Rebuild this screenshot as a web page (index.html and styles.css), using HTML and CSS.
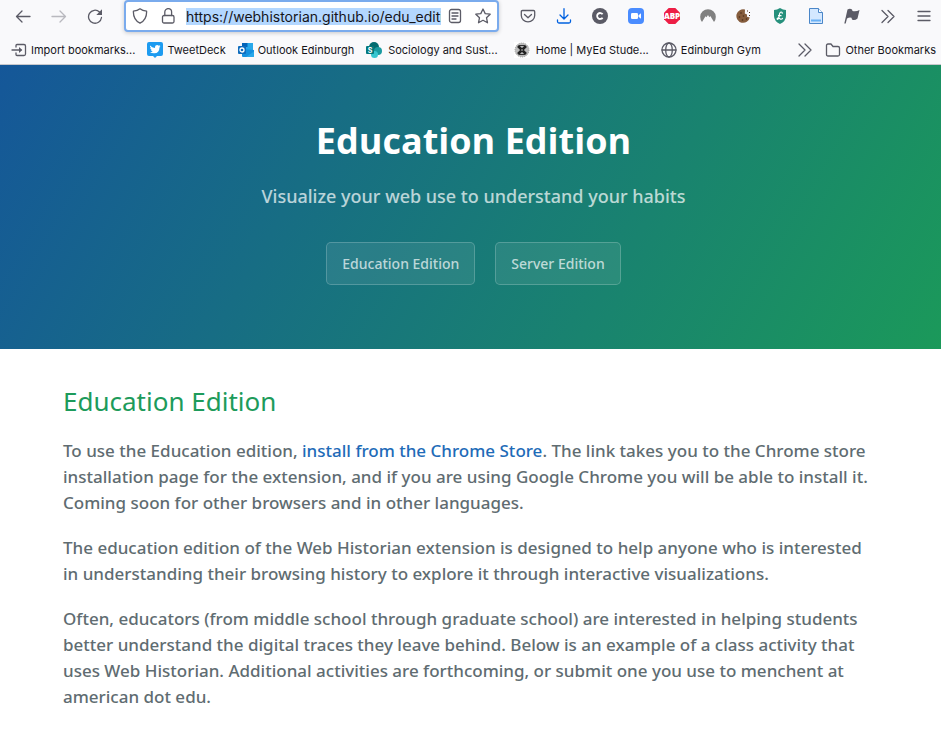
FILE: index.html
```html
<!DOCTYPE html>
<html lang="en">
<head>
<meta charset="utf-8">
<title>Education Edition</title>
<link rel="stylesheet" href="styles.css">
</head>
<body>
<div class="browser">
  <div class="toolbar">
    <button class="tool" aria-label="Back"><svg width="16" height="16" viewBox="0 0 16 16" class="line"><path d="M15 8.500H1.500M7 3L1.500 8.500L7 14"/></svg></button>
    <button class="tool faded" aria-label="Forward"><svg width="16" height="16" viewBox="0 0 16 16" class="line"><path d="M1 8.500H14.500M9 3L14.500 8.500L9 14"/></svg></button>
    <button class="tool" aria-label="Reload"><svg width="16" height="16" viewBox="0 0 16 16" class="line"><path d="M12.500 4A6.500 6.500 0 1 0 14.500 9.500"/><path d="M15 1.300V7H9.300Z" class="solid"/></svg></button>
    <div class="address">
      <svg width="16" height="16" viewBox="0 0 16 16" class="line"><path d="M8 .8Q10.500 2.800 14.600 3.200C14.800 8.500 12.700 12.800 8 15.200C3.300 12.800 1.200 8.500 1.400 3.200Q5.500 2.800 8 .8Z"/></svg>
      <svg width="16" height="16" viewBox="0 0 16 16" class="line"><rect x="2.500" y="7.500" width="11.500" height="7.500" rx="1.500"/><path d="M4.800 7.500V4A3.400 3.400 0 0 1 11.600 4V7.500"/></svg>
      <input class="url" aria-label="Address" value="https://webhistorian.github.io/edu_edition">
      <svg width="16" height="16" viewBox="0 0 16 16" class="line"><rect x="2.500" y="1.500" width="11" height="13" rx="2"/><path d="M5 5H11M5 8H11M5 11H9"/></svg>
      <svg width="16" height="16" viewBox="0 0 16 16" class="line"><path d="M8 1L10.200 5.600L15.200 6.200L11.500 9.700L12.500 14.800L8 12.300L3.500 14.800L4.500 9.700L.8 6.200L5.800 5.600Z"/></svg>
    </div>
    <button class="tool" aria-label="Save to Pocket"><svg width="16" height="16" viewBox="0 0 16 16" class="line"><path d="M2.500 2.500H13.500Q14.700 2.500 14.700 3.700V7.500A6.700 6.300 0 0 1 1.300 7.500V3.700Q1.300 2.500 2.500 2.500ZM4.500 6.500L8 9.800L11.500 6.500"/></svg></button>
    <button class="tool blue" aria-label="Downloads"><svg width="16" height="16" viewBox="0 0 16 16" class="line"><path d="M8 .7V10.500M4 7L8 11L12 7M1.500 12V13.500Q1.500 15 3 15H13Q14.500 15 14.500 13.500V12"/></svg></button>
    <button class="tool" aria-label="Clipper"><svg width="16" height="16" viewBox="0 0 16 16"><circle cx="8" cy="8" r="8" fill="#5b5b66"/><path d="M10.600 6.300A3 3 0 1 0 10.600 9.700" fill="none" stroke="#fff" stroke-width="1.800"/></svg></button>
    <button class="tool" aria-label="Zoom"><svg width="16" height="16" viewBox="0 0 16 16"><rect width="16" height="16" rx="4" fill="#4a8cff"/><rect x="3" y="5" width="7" height="6" rx="1.300" fill="#fff"/><path d="M10.500 7.200L13 5.300V10.700L10.500 8.800Z" fill="#fff"/></svg></button>
    <button class="tool" aria-label="Adblock Plus"><svg width="16" height="16" viewBox="0 0 16 16"><path d="M4.700 0H11.300L16 4.700V11.300L11.300 16H4.700L0 11.300V4.700Z" fill="#ed1e45"/><text x="8" y="11" class="abp">ABP</text></svg></button>
    <button class="tool" aria-label="VPN"><svg width="16" height="16" viewBox="0 0 16 16"><path d="M2 14A7.800 7.800 0 1 1 14 14L10.300 8L9.300 9.200L8 7L6.500 9.200L5.500 8.300Z" fill="#808080"/></svg></button>
    <button class="tool" aria-label="Cookies"><svg width="16" height="16" viewBox="0 0 16 16"><path d="M9 1.500A6.800 6.800 0 1 0 13.800 9.500L11 8.800L11 6.500L8.800 5.500Z" fill="#855c3c"/><g fill="#4a2d19"><circle cx="5" cy="5" r=".8"/><circle cx="3.500" cy="9" r=".8"/><circle cx="7.500" cy="8" r=".8"/><circle cx="6.500" cy="12" r=".8"/><circle cx="10.500" cy="11" r=".8"/><rect x="11" y="2.500" width="1" height="1"/><rect x="13" y="4" width="1" height="1"/><rect x="13" y="7" width="1" height="1"/></g></svg></button>
    <button class="tool" aria-label="Library access"><svg width="16" height="16" viewBox="0 0 16 16"><path d="M8 0Q11 2 14 2V8Q14 13 8 16Q2 13 2 8V2Q5 2 8 0Z" fill="#26907c"/><path d="M10.300 5.700Q10.300 3.800 9 4Q7.500 4.300 7.300 7.500Q7 11 5.500 11.300Q4.500 10.500 6 10.200Q8 10.500 8.500 11.200Q10 11.500 10.700 10M6 7.700H9.500" fill="none" stroke="#fff" stroke-width="1.200"/></svg></button>
    <button class="tool" aria-label="Document"><svg width="16" height="16" viewBox="0 0 16 16"><path d="M1.500 .5H10.500L14.500 4.500V15.500H1.500Z" fill="#d4e8ff" stroke="#4a86c8"/><path d="M10.500 .5V4.500H14.500" fill="#fff" stroke="#4a86c8"/><path d="M3 12.500H13" stroke="#69b1f5" stroke-width="2"/></svg></button>
    <button class="tool" aria-label="Flag"><svg width="16" height="16" viewBox="0 0 16 16"><path d="M3.500 1.500Q6 0 8 1.500L8.500 3Q12 4 15.500 2L13.500 10.500Q10.500 13 8 11.500L7.500 9.800Q5.500 9 3 10.500L1.700 15.500H.3Z" fill="#5b5b66"/></svg></button>
    <button class="tool" aria-label="More tools"><svg width="16" height="16" viewBox="0 0 16 16" class="line"><path d="M2 2.500L8 8.500L2 14.500M8 2.500L14 8.500L8 14.500"/></svg></button>
    <button class="tool menu" aria-label="Menu"><svg width="16" height="16" viewBox="0 0 16 16" class="line"><path d="M2 3.500H14M2 8H14M2 12.500H14"/></svg></button>
  </div>
  <nav class="bookmarks" aria-label="Bookmarks">
    <a href="#"><svg width="16" height="16" viewBox="0 0 16 16" class="line"><path d="M5 5V3.500Q5 2.500 6 2.500H13Q14.500 2.500 14.500 4V12Q14.500 13.500 13 13.500H6Q5 13.500 5 12.500V11M1 8H10"/><path d="M8 5L11.300 8L8 11Z" class="solid"/></svg>Import bookmarks...</a>
    <a href="#"><svg width="16" height="16" viewBox="0 0 16 16"><path d="M2 0H14Q16 0 16 2V12Q16 14 14 14H10L8 16L6 14H2Q0 14 0 12V2Q0 0 2 0Z" fill="#1d9bf0"/><path d="M3 3.500Q5 5.800 7.900 5.900Q7.700 3.300 10 3Q11.200 3 11.800 3.700L13.200 3.300L12.500 4.500L13.500 4.300L12.500 5.400Q12.300 11 7.300 11.300Q4.800 11.400 3 10.200Q4.700 10.200 5.700 9.500Q4.400 9.200 4 8H4.700Q3.200 7.300 3.200 5.800L4 6Q2.500 4.800 3 3.500Z" fill="#fff"/></svg>TweetDeck</a>
    <a href="#"><svg width="16" height="16" viewBox="0 0 16 16"><path d="M4 1H15V9H4Z" fill="#28a8ea"/><path d="M4 1H9.500V5H4Z" fill="#0364b8"/><path d="M4 7L16 8V14Q16 15 15 15H5Q4 15 4 14Z" fill="#1490df"/><path d="M8 15L16 9.500V14Q16 15 15 15Z" fill="#28a8ea"/><rect y="4" width="8" height="8" rx="1" fill="#0f6cbd"/><circle cx="4" cy="8" r="2" fill="none" stroke="#fff" stroke-width="1.300"/></svg>Outlook Edinburgh</a>
    <a href="#" class="roomy spaced"><svg width="16" height="16" viewBox="0 0 16 16"><circle cx="8" cy="5" r="5" fill="#036c70"/><circle cx="12" cy="9" r="4" fill="#1a9ba1"/><circle cx="8.500" cy="12.500" r="3.500" fill="#37c6d0"/><rect y="4" width="8" height="8" rx="1" fill="#03787c"/><text x="4" y="10.500" class="share">S</text></svg>Sociology and Sust...</a>
    <a href="#" class="roomy"><svg width="16" height="16" viewBox="0 0 16 16"><rect width="16" height="16" fill="#fff"/><circle cx="8" cy="8" r="7" fill="#bbb" stroke="#999" stroke-dasharray="1 1"/><path d="M4 4L12 12M12 4L4 12" stroke="#222" stroke-width="2.500"/><path d="M5 3.500H11M5 12.500H11" stroke="#333"/><circle cx="8" cy="8" r="1" fill="#888"/></svg>Home | MyEd Stude...</a>
    <a href="#"><svg width="16" height="16" viewBox="0 0 16 16" class="line"><circle cx="8" cy="8" r="7"/><ellipse cx="8" cy="8" rx="3.300" ry="7"/><path d="M1 8H15"/></svg>Edinburgh Gym</a>
    <button class="more" aria-label="More bookmarks"><svg width="16" height="16" viewBox="0 0 16 16" class="line"><path d="M2 2L8 8L2 14M8 2L14 8L8 14"/></svg></button>
    <a href="#"><svg width="16" height="16" viewBox="0 0 16 16" class="line"><path d="M1.500 12.500V3.500Q1.500 2 3 2H6L8 4.500H13Q14.500 4.500 14.500 6V12.500Q14.500 14 13 14H3Q1.500 14 1.500 12.500Z"/></svg>Other Bookmarks</a>
  </nav>
</div>
<header class="hero">
  <h1>Education Edition</h1>
  <p>Visualize your web use to understand your habits</p>
  <div class="actions">
    <a href="#">Education Edition</a>
    <a href="#">Server Edition</a>
  </div>
</header>
<main class="content">
  <h2>Education Edition</h2>
  <p>To use the Education edition, <a href="#">install from the Chrome Store</a>. The link takes you to the Chrome store installation page for the extension, and if you are using Google Chrome you will be able to install it. Coming soon for other browsers and in other languages.</p>
  <p>The education edition of the Web Historian extension is designed to help anyone who is interested in understanding their browsing history to explore it through interactive visualizations.</p>
  <p>Often, educators (from middle school through graduate school) are interested in helping students better understand the digital traces they leave behind. Below is an example of a class activity that uses Web Historian. Additional activities are forthcoming, or submit one you use to menchent at american dot edu.</p>
</main>
</body>
</html>
```
FILE: styles.css
```css
* { box-sizing: border-box; }
body { margin: 0; background: #fff; font-family: "Noto Sans", "Open Sans", sans-serif; font-weight: 500; color: #606c71; }
a { text-decoration: none; }
button { border: 0; background: none; padding: 0; color: inherit; }
svg { flex: none; display: block; }

.line { fill: none; stroke: currentColor; stroke-width: 1.3; stroke-linejoin: round; stroke-linecap: round; }
.solid { fill: currentColor; stroke: none; }
.abp { font: 800 8px "Open Sans", sans-serif; fill: #fff; text-anchor: middle; }
.share { font: 700 7px Inter, sans-serif; fill: #fff; text-anchor: middle; }

.browser { background: #f9f9fb; color: #5b5b66; border-bottom: 1px solid #c8c8cc; font-family: Inter, sans-serif; font-weight: 400; }
.toolbar { display: flex; align-items: center; height: 32px; padding-left: 5px; }
.tool { flex: none; width: 36px; height: 32px; display: flex; align-items: center; justify-content: center; }
.menu { width: 35px; }
.faded { opacity: 0.4; }
.blue { color: #0061e0; }
.address { flex: 1; min-width: 0; display: flex; align-items: center; gap: 12px; height: 32px; margin: 0 11px; padding: 0 6px; border: 2px solid #7aabed; border-radius: 4px; background: #fff; box-shadow: 0 1px 4px rgba(0, 0, 0, 0.2); }
.url { flex: 1; min-width: 0; height: 17px; margin: 0 -6px 0 -2px; padding: 0; border: 0; outline: 0; background: #b3d7ff; color: #15141a; font: 14px Inter, sans-serif; }
.bookmarks { display: flex; align-items: center; height: 32px; gap: 12px; padding: 4px 5px 0 11px; white-space: nowrap; font-size: 11px; }
.bookmarks a { display: flex; align-items: center; gap: 4px; color: #15141a; }
.bookmarks .roomy { gap: 6px; }
.bookmarks .spaced { margin-right: 4px; }
.bookmarks svg { color: #5b5b66; }
.more { margin-left: auto; }

.hero { padding: 48px 64px 64px 70px; text-align: center; color: #fff; background: linear-gradient(120deg, #155799, #1b995a); }
.hero h1 { margin: 0 0 14px; font-family: "Open Sans", sans-serif; font-size: 36px; line-height: 56px; }
.hero p { margin: 0 0 32px; font-size: 18px; line-height: 27px; opacity: 0.7; }
.actions { display: flex; justify-content: center; gap: 20px; }
.actions a { padding: 10px 15px; border: 1px solid rgba(255, 255, 255, 0.2); border-radius: 5px; background: rgba(255, 255, 255, 0.08); color: rgba(255, 255, 255, 0.7); font-size: 14px; line-height: 21px; }

.content { padding: 32px 63px; font-size: 17px; line-height: 26px; }
.content h2 { margin: 0 0 17px; color: #1d9b5b; font-weight: 400; font-size: 26px; line-height: 40px; }
.content p { margin: 0 0 19px; }
.content a { color: #1e6bb8; }
```
